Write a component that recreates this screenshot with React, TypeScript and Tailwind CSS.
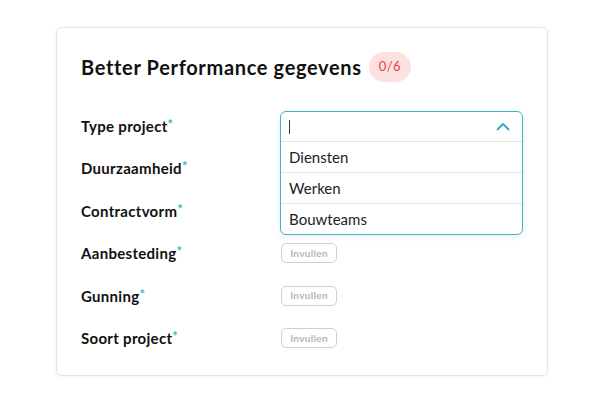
import React from "react";

const fields = [
  "Type project",
  "Duurzaamheid",
  "Contractvorm",
  "Aanbesteding",
  "Gunning",
  "Soort project",
];

const options = ["Diensten", "Werken", "Bouwteams"];

const App: React.FC = () => {
  return (
    <div
      className="w-[598px] h-[408px] bg-white pt-[27px] pl-[56px]"
      style={{ fontFamily: "Lato, 'Open Sans', sans-serif" }}
    >
      <div className="w-[492px] h-[349px] border border-[#e4e4e4] rounded-md shadow-[0_1px_4px_rgba(0,0,0,0.06)] pt-6 px-6">
        <div className="flex items-center gap-[7px] h-[30px]">
          <h1 className="text-[20px] font-bold tracking-[0.033em] text-[#111]">Better Performance gegevens</h1>
          <span className="h-[30px] px-[10px] rounded-full bg-[#fde1e1] text-[#e8403f] text-[13px] tracking-[0.03em] flex items-center">
            0/6
          </span>
        </div>

        <div className="mt-[23px] flex flex-col">
          {fields.map((label, i) => (
            <div key={label} className="flex items-center h-[42.4px]">
              <div className="w-[200px] text-[15px] font-bold tracking-[0.02em] text-[#111]">
                {label}
                <span className="text-[#3ab5c0] text-[13px] relative -top-[3px]">*</span>
              </div>
              {i === 0 && (
                <div className="relative w-[244px] h-[30px]">
                  {/* open dropdown, lies over the next rows */}
                  <div className="absolute top-0 left-0 w-full bg-white border border-[#3fb7c2] rounded-md shadow-[0_2px_6px_rgba(0,0,0,0.08)] z-10">
                    <div className="h-[29px] flex items-center justify-between pl-[8px] pr-[12px]">
                      <span className="w-px h-[14px] bg-[#333]" />
                      <svg width="14" height="9" viewBox="0 0 14 9" fill="none">
                        <path d="M1.5 7.5L7 2l5.5 5.5" stroke="#2fb0bb" strokeWidth="1.8" strokeLinecap="round" strokeLinejoin="round" />
                      </svg>
                    </div>
                    {options.map((o) => (
                      <div
                        key={o}
                        className="h-[31px] border-t border-[#e3e3e3] flex items-center pl-[8px] text-[15px] text-[#222]"
                      >
                        {o}
                      </div>
                    ))}
                  </div>
                </div>
              )}
              {i > 2 && (
                <button className="h-[20px] w-[56px] border border-[#cfcfcf] rounded-[5px] text-[10px] font-bold tracking-[0.03em] text-[#b5b5b5] flex items-center justify-center">
                  Invullen
                </button>
              )}
            </div>
          ))}
        </div>
      </div>
    </div>
  );
};

export default App;
